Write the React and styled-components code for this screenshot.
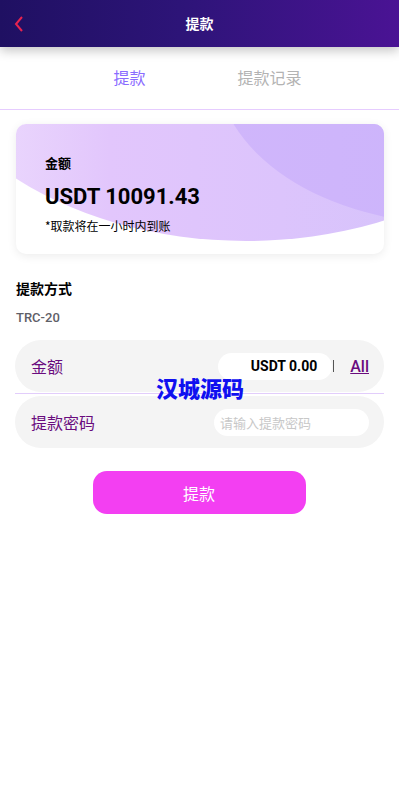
import React from "react";
import styled, { createGlobalStyle } from "styled-components";

const Global = createGlobalStyle`
  html, body { margin: 0; padding: 0; background: #fff; }
  body { font-family: Roboto, "Noto Sans CJK SC", sans-serif; }
  * { box-sizing: border-box; }
`;

const Page = styled.div`
  width: 399px;
  min-height: 792px;
  background: #fff;
  position: relative;
`;

const Header = styled.header`
  height: 47px;
  background: linear-gradient(90deg, #1f1062 0%, #2d1478 45%, #4a1394 100%);
  display: grid;
  grid-template-columns: 48px 1fr 48px;
  align-items: center;
  box-shadow: 0 4px 10px rgba(0, 0, 0, 0.22);
  position: relative;
  z-index: 2;
`;

const Back = styled.div`
  display: flex;
  align-items: center;
  padding-left: 13px;
  padding-top: 1px;
`;

const Title = styled.h1`
  margin: 0;
  text-align: center;
  color: #fff;
  font-size: 14px;
  font-weight: 700;
  line-height: 20px;
  margin-top: -2px;
  font-family: "Noto Sans CJK SC", sans-serif;
`;

const Tabs = styled.nav`
  height: 63px;
  display: flex;
  justify-content: center;
  align-items: center;
  gap: 92px;
  border-bottom: 1px solid #e6ccff;
  padding: 0 0 3px 16px;
`;

const Tab = styled.div`
  font-family: "Noto Sans CJK SC", sans-serif;
  font-size: 16px;
  color: ${(p) => (p.$active ? "#8a6cff" : "#b3b3b3")};
`;

const Body = styled.main`
  padding: 14px 15px 0 16px;
`;

const Card = styled.section`
  position: relative;
  overflow: hidden;
  height: 130px;
  border-radius: 10px;
  background: #fff;
  box-shadow: 0 2px 10px rgba(0, 0, 0, 0.08);
  padding: 30px 29px 0;
  &::before {
    content: "";
    position: absolute;
    left: -110px;
    top: -357px;
    width: 680px;
    height: 474px;
    border-radius: 50%;
    background: linear-gradient(90deg, #eddcfd 8%, #e2c6fc 30%, #dcc4fc 55%, #d6c3fb 75%);
  }
  &::after {
    content: "";
    position: absolute;
    left: 200px;
    top: -220px;
    width: 480px;
    height: 320px;
    border-radius: 50%;
    background: linear-gradient(90deg, #d0b6fb, #c8b2fb);
  }
`;

const CardInner = styled.div`
  position: relative;
  z-index: 1;
  display: flex;
  flex-direction: column;
`;

const CardLabel = styled.div`
  font-family: "Noto Sans CJK SC", sans-serif;
  font-size: 13px;
  font-weight: 700;
  color: #000;
  line-height: 18px;
`;

const Balance = styled.div`
  font-family: Roboto, sans-serif;
  font-size: 22px;
  font-weight: 700;
  color: #000;
  line-height: 26px;
  margin-top: 12px;
`;

const Note = styled.div`
  font-family: "Noto Sans CJK SC", sans-serif;
  font-size: 12px;
  color: #000;
  line-height: 16px;
  margin-top: 8px;
`;

const SectionTitle = styled.div`
  font-family: "Noto Sans CJK SC", sans-serif;
  font-size: 14px;
  font-weight: 700;
  color: #000;
  margin-top: 24px;
  line-height: 20px;
`;

const Method = styled.div`
  font-family: Roboto, sans-serif;
  font-size: 13px;
  font-weight: 500;
  color: #5f6068;
  margin-top: 11px;
  line-height: 18px;
`;

const Form = styled.div`
  margin-top: 13px;
  position: relative;
`;

const Row = styled.div`
  height: 52px;
  border-radius: 26px;
  background: #f4f4f4;
  display: flex;
  align-items: center;
  padding: 0 15px 0 16px;
  margin-left: -1px;
`;

const Divider = styled.div`
  height: 1px;
  background: #e2cdfb;
  margin: 1px 0 2px -1px;
`;

const RowLabel = styled.div`
  font-family: "Noto Sans CJK SC", sans-serif;
  font-size: 16px;
  color: #6a0c7e;
  flex: 1;
`;

const AmountInput = styled.div`
  width: 114px;
  height: 27px;
  border-radius: 14px;
  background: #fff;
  display: flex;
  align-items: center;
  justify-content: flex-end;
  padding-right: 15px;
  font-family: Roboto, sans-serif;
  font-size: 14px;
  font-weight: 700;
  color: #000;
`;

const Caret = styled.span`
  width: 1px;
  height: 12px;
  background: #555;
  margin-left: 1px;
`;

const All = styled.a`
  font-family: Roboto, sans-serif;
  font-size: 16px;
  font-weight: 500;
  color: #6a0c7e;
  text-decoration: underline;
  margin-left: 16px;
`;

const PwdInput = styled.div`
  width: 155px;
  height: 27px;
  border-radius: 14px;
  background: #fff;
  display: flex;
  align-items: center;
  padding-left: 6px;
  font-family: "Noto Sans CJK SC", sans-serif;
  font-size: 13px;
  color: #c8c8c8;
`;

const Watermark = styled.div`
  position: absolute;
  left: 140px;
  top: 34px;
  font-family: "Noto Sans CJK SC", sans-serif;
  font-size: 22px;
  font-weight: 900;
  color: #1010f0;
  line-height: 26px;
  z-index: 3;
`;

const ButtonWrap = styled.div`
  display: flex;
  justify-content: center;
  margin-top: 23px;
`;

const Submit = styled.button`
  width: 213px;
  height: 43px;
  border: none;
  border-radius: 14px;
  background: #f33ff2;
  color: #fff;
  font-family: "Noto Sans CJK SC", sans-serif;
  font-size: 16px;
  margin-left: -2px;
`;

export default function App() {
  return (
    <Page>
      <Global />
      <Header>
        <Back>
          <svg width="12" height="18" viewBox="0 0 12 18">
            <path d="M9 2 L3 9 L9 16" fill="none" stroke="#e8234f" strokeWidth="2" />
          </svg>
        </Back>
        <Title>提款</Title>
        <div />
      </Header>
      <Tabs>
        <Tab $active>提款</Tab>
        <Tab>提款记录</Tab>
      </Tabs>
      <Body>
        <Card>
          <CardInner>
            <CardLabel>金额</CardLabel>
            <Balance>USDT 10091.43</Balance>
            <Note>*取款将在一小时内到账</Note>
          </CardInner>
        </Card>
        <SectionTitle>提款方式</SectionTitle>
        <Method>TRC-20</Method>
        <Form>
          <Row>
            <RowLabel>金额</RowLabel>
            <AmountInput>USDT 0.00</AmountInput>
            <Caret />
            <All>All</All>
          </Row>
          <Divider />
          <Row>
            <RowLabel>提款密码</RowLabel>
            <PwdInput>请输入提款密码</PwdInput>
          </Row>
          <Watermark>汉城源码</Watermark>
        </Form>
        <ButtonWrap>
          <Submit>提款</Submit>
        </ButtonWrap>
      </Body>
    </Page>
  );
}
